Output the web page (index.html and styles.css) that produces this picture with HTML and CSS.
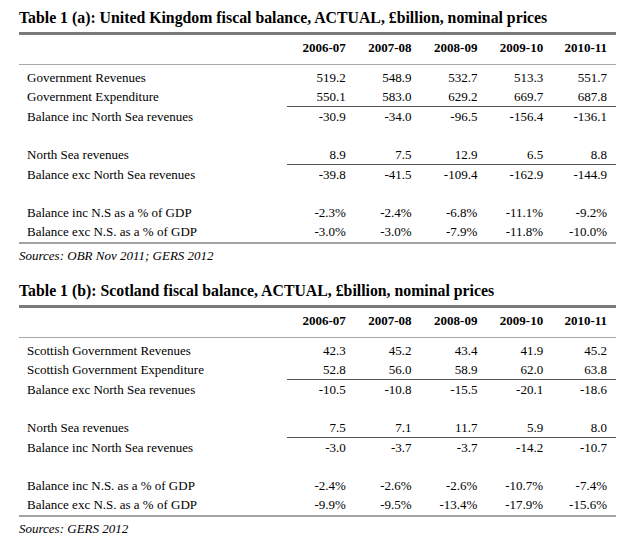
FILE: index.html
```html
<!DOCTYPE html>
<html lang="en">
<head>
<meta charset="utf-8">
<title>Fiscal balance tables</title>
<link rel="stylesheet" href="styles.css">
</head>
<body>
<main class="page">
  <section class="block">
    <h2 class="title">Table 1 (a): United Kingdom fiscal balance, ACTUAL, £billion, nominal prices</h2>
    <table class="fiscal">
      <thead>
        <tr><th class="label"></th><th>2006-07</th><th>2007-08</th><th>2008-09</th><th>2009-10</th><th>2010-11</th></tr>
      </thead>
      <tbody>
        <tr><td class="label">Government Revenues</td><td>519.2</td><td>548.9</td><td>532.7</td><td>513.3</td><td>551.7</td></tr>
        <tr class="ul"><td class="label">Government Expenditure</td><td>550.1</td><td>583.0</td><td>629.2</td><td>669.7</td><td>687.8</td></tr>
        <tr><td class="label">Balance inc North Sea revenues</td><td>-30.9</td><td>-34.0</td><td>-96.5</td><td>-156.4</td><td>-136.1</td></tr>
        <tr class="blank"><td colspan="6"></td></tr>
        <tr class="ul"><td class="label">North Sea revenues</td><td>8.9</td><td>7.5</td><td>12.9</td><td>6.5</td><td>8.8</td></tr>
        <tr><td class="label">Balance exc North Sea revenues</td><td>-39.8</td><td>-41.5</td><td>-109.4</td><td>-162.9</td><td>-144.9</td></tr>
        <tr class="blank"><td colspan="6"></td></tr>
        <tr><td class="label">Balance inc N.S as a % of GDP</td><td>-2.3%</td><td>-2.4%</td><td>-6.8%</td><td>-11.1%</td><td>-9.2%</td></tr>
        <tr class="last"><td class="label">Balance exc N.S. as a % of GDP</td><td>-3.0%</td><td>-3.0%</td><td>-7.9%</td><td>-11.8%</td><td>-10.0%</td></tr>
      </tbody>
    </table>
    <p class="source">Sources: OBR Nov 2011; GERS 2012</p>
  </section>

  <section class="block">
    <h2 class="title">Table 1 (b): Scotland fiscal balance, ACTUAL, £billion, nominal prices</h2>
    <table class="fiscal">
      <thead>
        <tr><th class="label"></th><th>2006-07</th><th>2007-08</th><th>2008-09</th><th>2009-10</th><th>2010-11</th></tr>
      </thead>
      <tbody>
        <tr><td class="label">Scottish Government Revenues</td><td>42.3</td><td>45.2</td><td>43.4</td><td>41.9</td><td>45.2</td></tr>
        <tr class="ul"><td class="label">Scottish Government Expenditure</td><td>52.8</td><td>56.0</td><td>58.9</td><td>62.0</td><td>63.8</td></tr>
        <tr><td class="label">Balance exc North Sea revenues</td><td>-10.5</td><td>-10.8</td><td>-15.5</td><td>-20.1</td><td>-18.6</td></tr>
        <tr class="blank"><td colspan="6"></td></tr>
        <tr class="ul"><td class="label">North Sea revenues</td><td>7.5</td><td>7.1</td><td>11.7</td><td>5.9</td><td>8.0</td></tr>
        <tr><td class="label">Balance inc North Sea revenues</td><td>-3.0</td><td>-3.7</td><td>-3.7</td><td>-14.2</td><td>-10.7</td></tr>
        <tr class="blank"><td colspan="6"></td></tr>
        <tr><td class="label">Balance inc N.S. as a % of GDP</td><td>-2.4%</td><td>-2.6%</td><td>-2.6%</td><td>-10.7%</td><td>-7.4%</td></tr>
        <tr class="last"><td class="label">Balance exc N.S. as a % of GDP</td><td>-9.9%</td><td>-9.5%</td><td>-13.4%</td><td>-17.9%</td><td>-15.6%</td></tr>
      </tbody>
    </table>
    <p class="source">Sources: GERS 2012</p>
  </section>
</main>
</body>
</html>
```

FILE: styles.css
```css
html, body {
  margin: 0;
  padding: 0;
  background: #fff;
}

.page {
  padding: 8px 19px 0 19px;
  font-family: "Liberation Serif", "Times New Roman", serif;
  color: #000;
  display: flex;
  flex-direction: column;
  gap: 16px;
}

.block {
  display: flex;
  flex-direction: column;
}

.title {
  margin: 0 0 4px 0;
  font-size: 15.8px;
  line-height: 20px;
  font-weight: bold;
}

.fiscal {
  width: 597px;
  border-collapse: collapse;
  table-layout: fixed;
  font-size: 13px;
  line-height: 19px;
  border-top: 3px solid #7a7a7a;
  border-bottom: 2px solid #a3a3a3;
}

.fiscal th,
.fiscal td {
  padding: 0 7px 0 0;
  text-align: right;
  height: 19px;
  white-space: nowrap;
}

.fiscal th.label,
.fiscal td.label {
  width: 260px;
  padding: 0 0 0 8px;
  text-align: left;
}

.fiscal th:last-child,
.fiscal td:last-child {
  padding-right: 9px;
}

.fiscal thead th {
  font-weight: bold;
  height: 19px;
  padding-top: 3px;
  padding-bottom: 7px;
  border-bottom: 1px solid #a8a8a8;
}

.fiscal tbody tr:first-child td {
  padding-top: 3px;
}

.fiscal tr.ul td {
  height: 18px;
}

.fiscal tr.ul td:not(.label) {
  border-bottom: 1px solid #555;
}

.fiscal tr.last td {
  padding-bottom: 1px;
}

.source {
  margin: 2px 0 0 0;
  font-size: 13px;
  line-height: 19px;
  font-style: italic;
}
```
